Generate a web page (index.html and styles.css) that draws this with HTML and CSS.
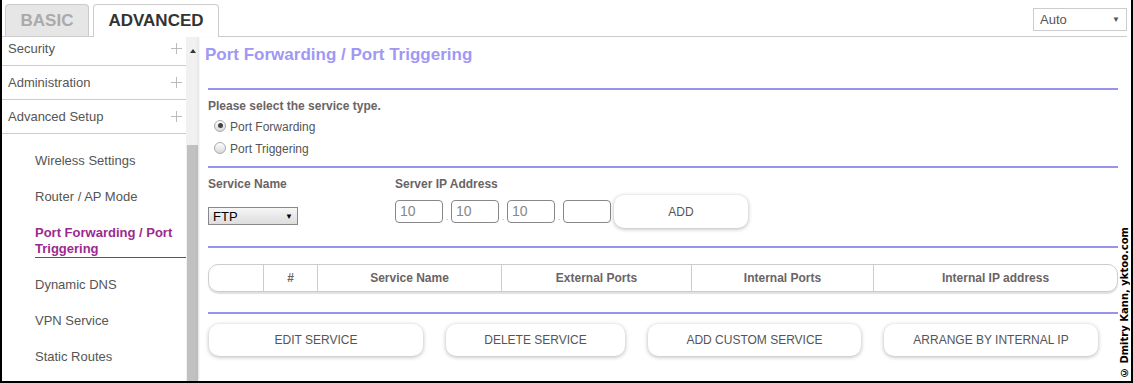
FILE: index.html
```html
<!DOCTYPE html>
<html lang="en">
<head>
    <meta charset="UTF-8">
    <title>Port Forwarding / Port Triggering</title>
    <link rel="stylesheet" href="styles.css">
</head>
<body>
    <div class="frame">
        <!-- Tabs -->
        <div class="tab-bar">
            <div class="tab tab-basic">BASIC</div>
            <div class="tab tab-advanced">ADVANCED</div>
            <div class="lang-select">Auto<span class="arrow">&#9660;</span></div>
        </div>
        <div class="page">
            <!-- Sidebar -->
            <div class="sidebar">
                <div class="menu">
                    <div class="menu-item">Security<svg class="plus" width="11" height="11" viewBox="0 0 11 11"><path d="M5.5 0V11M0 5.5H11" stroke="#bbb" stroke-width="1"/></svg></div>
                    <div class="menu-item">Administration<svg class="plus" width="11" height="11" viewBox="0 0 11 11"><path d="M5.5 0V11M0 5.5H11" stroke="#bbb" stroke-width="1"/></svg></div>
                    <div class="menu-item">Advanced Setup<svg class="plus" width="11" height="11" viewBox="0 0 11 11"><path d="M5.5 0V11M0 5.5H11" stroke="#bbb" stroke-width="1"/></svg></div>
                </div>
                <div class="submenu">
                    <div class="sub-item">Wireless Settings</div>
                    <div class="sub-item">Router / AP Mode</div>
                    <div class="sub-item active">Port Forwarding / Port Triggering</div>
                    <div class="sub-item">Dynamic DNS</div>
                    <div class="sub-item">VPN Service</div>
                    <div class="sub-item">Static Routes</div>
                </div>
            </div>
            <div class="scrollbar">
                <div class="scroll-up"></div>
                <div class="scroll-thumb"></div>
            </div>
            <!-- Main content -->
            <div class="main">
                <div class="page-title">Port Forwarding / Port Triggering</div>
                <div class="rule rule-first"></div>
                <div class="section-label">Please select the service type.</div>
                <div class="radio-row first"><span class="radio checked"></span>Port Forwarding</div>
                <div class="radio-row"><span class="radio"></span>Port Triggering</div>
                <div class="rule"></div>
                <div class="service-row">
                    <div class="field field-name">
                        <div class="field-label">Service Name</div>
                        <div class="service-select">FTP<span class="arrow">&#9660;</span></div>
                    </div>
                    <div class="field">
                        <div class="field-label">Server IP Address</div>
                        <div class="ip-row">
                            <div class="ip-box">10</div><span class="ip-dot">.</span>
                            <div class="ip-box">10</div><span class="ip-dot">.</span>
                            <div class="ip-box">10</div><span class="ip-dot">.</span>
                            <div class="ip-box"></div>
                            <button class="btn btn-add">ADD</button>
                        </div>
                    </div>
                </div>
                <div class="rule"></div>
                <div class="table">
                    <div class="col col-check"></div>
                    <div class="col col-num">#</div>
                    <div class="col col-name">Service Name</div>
                    <div class="col col-ext">External Ports</div>
                    <div class="col col-int">Internal Ports</div>
                    <div class="col col-ip">Internal IP address</div>
                </div>
                <div class="rule rule-last"></div>
                <div class="actions">
                    <button class="btn btn-edit">EDIT SERVICE</button>
                    <button class="btn btn-delete">DELETE SERVICE</button>
                    <button class="btn btn-custom">ADD CUSTOM SERVICE</button>
                    <button class="btn btn-arrange">ARRANGE BY INTERNAL IP</button>
                </div>
            </div>
        </div>
        <div class="watermark">© Dmitry Kann, yktoo.com</div>
    </div>
</body>
</html>
```

FILE: styles.css
```css
/* Global */
body {
    margin: 0;
    font-family: "Liberation Sans", Arial, sans-serif;
    background-color: #fff;
}
.frame {
    position: relative;
    width: 1129px;
    height: 381px;
    border: 2px solid #000;
    border-top: none;
    overflow: hidden;
    display: flex;
    flex-direction: column;
}
/* Tabs */
.tab-bar {
    height: 36px;
    flex-shrink: 0;
    display: flex;
    align-items: flex-end;
    padding-left: 3px;
    border-bottom: 1px solid #ccc;
    margin-right: 4px;
    position: relative;
}
.tab {
    font-weight: bold;
    font-size: 17px;
    display: flex;
    align-items: center;
    justify-content: center;
    border: 1px solid #ccc;
    border-bottom: none;
    border-radius: 4px 4px 0 0;
}
.tab-basic {
    width: 82px;
    height: 31px;
    background-color: #e6e6e6;
    color: #aaa;
    margin-right: 4px;
}
.tab-advanced {
    width: 124px;
    height: 32px;
    background-color: #fff;
    color: #333;
    margin-bottom: -1px;
}
.lang-select {
    position: absolute;
    right: 0;
    top: 8px;
    width: 86px;
    height: 21px;
    border: 1px solid #ccc;
    font-size: 13px;
    color: #555;
    padding-left: 6px;
    display: flex;
    align-items: center;
    justify-content: space-between;
}
.lang-select .arrow {
    font-size: 8px;
    color: #555;
    margin-right: 6px;
}
/* Page */
.page {
    flex: 1;
    display: flex;
    overflow: hidden;
    padding-top: 1px;
}
/* Sidebar */
.sidebar {
    width: 184px;
    flex-shrink: 0;
    overflow: hidden;
    color: #555;
    font-size: 13px;
}
.menu {
    margin-top: -6px;
}
.menu-item {
    height: 33px;
    border-bottom: 1px solid #ccc;
    display: flex;
    align-items: center;
    justify-content: space-between;
    padding-left: 6px;
}
.plus {
    margin-right: 4px;
}
.submenu {
    padding-top: 9px;
    padding-left: 33px;
}
.sub-item {
    padding: 10px 0;
    line-height: 16px;
}
.sub-item.active {
    color: #9b2a8f;
    font-weight: bold;
    padding-bottom: 0;
    border-bottom: 1px solid #9b2a8f;
    margin-bottom: 9px;
}
/* Scrollbar */
.scrollbar {
    width: 13px;
    flex-shrink: 0;
    background-color: #f1f1f1;
    display: flex;
    flex-direction: column;
    align-items: center;
    margin-right: 1px;
    margin-top: -1px;
}
.scroll-up {
    width: 0;
    height: 0;
    margin-top: 12px;
    border-left: 3px solid transparent;
    border-right: 3px solid transparent;
    border-bottom: 4px solid #333;
}
.scroll-thumb {
    width: 11px;
    margin-top: 92px;
    flex: 1;
    background-color: #c1c1c1;
}
/* Main */
.main {
    width: 918px;
    padding-left: 8px;
    box-shadow: -3px 0 3px rgba(0, 0, 0, 0.04);
    color: #666;
    font-size: 12px;
}
.page-title {
    margin: 7px 0 0 -3px;
    font-size: 17px;
    font-weight: bold;
    color: #a098f4;
    line-height: 20px;
}
.rule {
    height: 2px;
    background-color: #9a93ee;
    width: 910px;
}
.rule-first {
    margin-top: 23px;
}
.section-label {
    font-weight: bold;
    margin-top: 8px;
    line-height: 16px;
    color: #6a6464;
}
.radio-row {
    display: flex;
    align-items: center;
    height: 22px;
    padding-left: 6px;
    color: #555;
}
.radio-row.first {
    margin-top: 2px;
}
.radio {
    width: 10px;
    height: 10px;
    border: 1px solid #aaa;
    border-radius: 50%;
    background: linear-gradient(#fff, #d8d8d8);
    margin-right: 4px;
    margin-top: -3px;
    position: relative;
}
.radio.checked::after {
    content: "";
    position: absolute;
    left: 2.5px;
    top: 2.5px;
    width: 5px;
    height: 5px;
    border-radius: 50%;
    background-color: #444;
}
.radio-row + .rule {
    margin-top: 6px;
}
/* Service row */
.service-row {
    display: flex;
    height: 78px;
}
.field-name {
    width: 187px;
}
.field-label {
    font-weight: bold;
    line-height: 16px;
    margin-top: 8px;
    color: #6a6464;
}
.service-select {
    margin-top: 15px;
    width: 80px;
    height: 16px;
    border: 1px solid #888;
    background: linear-gradient(#f6f6f6, #ddd);
    color: #000;
    font-size: 13px;
    padding-left: 4px;
    display: flex;
    align-items: center;
    justify-content: space-between;
    padding-right: 4px;
}
.service-select .arrow {
    font-size: 8px;
}
.ip-row {
    display: flex;
    align-items: center;
    margin-top: 3px;
}
.ip-box {
    width: 42px;
    height: 21px;
    border: 1px solid #888;
    border-radius: 4px;
    padding-left: 4px;
    font-size: 14px;
    color: #888;
    line-height: 21px;
}
.ip-dot {
    width: 8px;
    text-align: center;
    margin-top: 12px;
    font-size: 8px;
    color: #888;
}
.btn {
    background-color: #fff;
    border: none;
    border-radius: 10px;
    box-shadow: 0 1px 4px rgba(0, 0, 0, 0.3);
    font-family: "Liberation Sans", Arial, sans-serif;
    font-size: 12px;
    color: #555;
    height: 32px;
    padding: 0;
}
.btn-add {
    width: 134px;
    height: 33px;
    margin-left: 3px;
}
/* Table */
.table {
    margin-top: 16px;
    width: 908px;
    height: 26px;
    border: 1px solid #ccc;
    border-radius: 10px;
    box-shadow: 0 2px 1px rgba(0, 0, 0, 0.12);
    display: flex;
    font-weight: bold;
    color: #6a6464;
}
.col {
    display: flex;
    align-items: center;
    justify-content: center;
    border-left: 1px solid #ccc;
}
.col-check {
    width: 54px;
    border-left: none;
}
.col-num {
    width: 53px;
}
.col-name {
    width: 183px;
}
.col-ext {
    width: 189px;
}
.col-int {
    width: 181px;
}
.col-ip {
    flex: 1;
}
.rule-last {
    margin-top: 20px;
}
/* Actions */
.actions {
    display: flex;
    gap: 23px;
    margin-top: 10px;
    padding-left: 1px;
}
.btn-edit {
    width: 214px;
}
.btn-delete {
    width: 179px;
}
.btn-custom {
    width: 213px;
}
.btn-arrange {
    width: 214px;
}
/* Watermark */
.watermark {
    position: absolute;
    right: 1px;
    bottom: 3px;
    writing-mode: vertical-rl;
    transform: rotate(180deg);
    font-family: "DejaVu Sans", sans-serif;
    font-weight: bold;
    font-size: 10px;
    color: #000;
    background-color: #fff;
}
```
